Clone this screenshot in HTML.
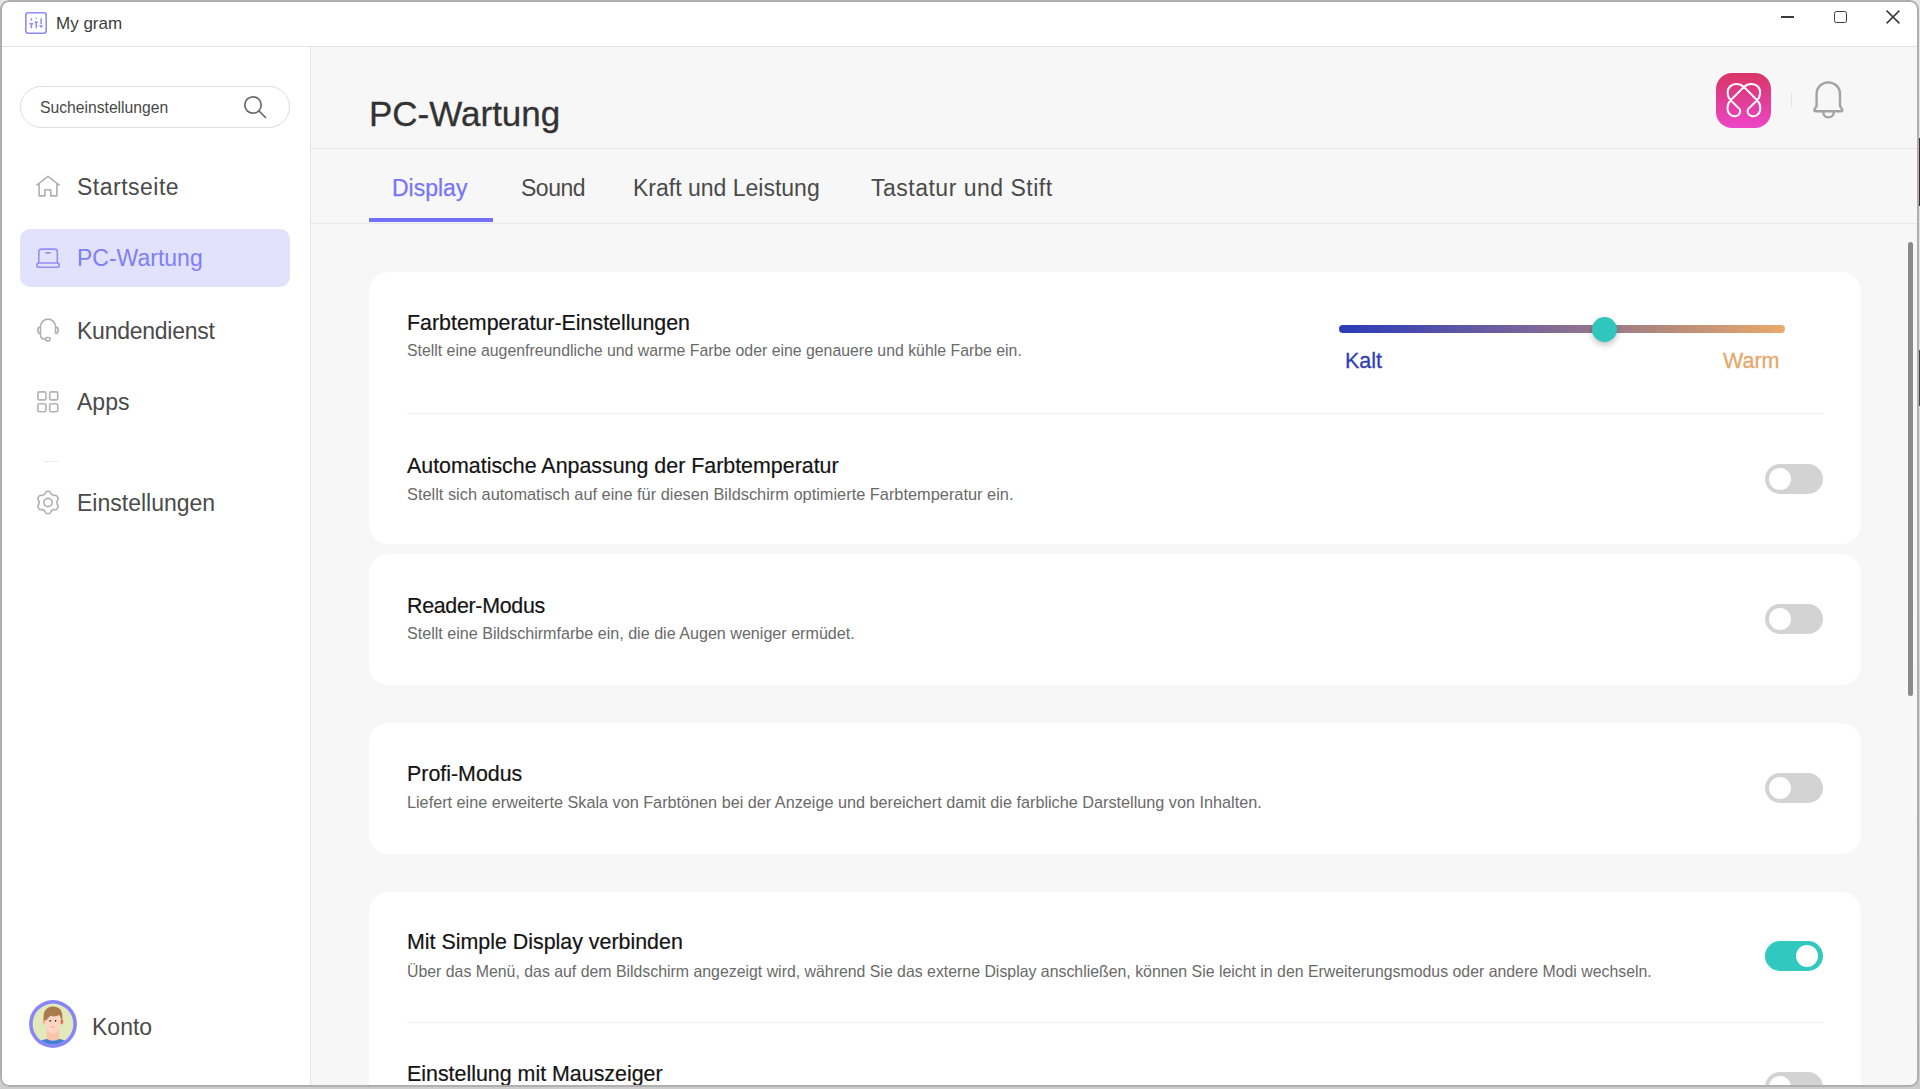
<!DOCTYPE html>
<html><head><meta charset="utf-8">
<style>
*{margin:0;padding:0;box-sizing:border-box}
html,body{width:1920px;height:1089px;overflow:hidden;background:linear-gradient(180deg,#e8e8e8,#cdcdcd);font-family:"Liberation Sans",sans-serif}
.abs{position:absolute}
svg.abs{z-index:3}
.t{position:absolute;white-space:nowrap;line-height:1}
#win{position:absolute;left:0;top:0;width:1918px;height:1087px;border-radius:9px;overflow:hidden;background:#f7f7f7}
#frame{position:absolute;left:-0.2px;top:-0.2px;width:1918.9px;height:1087.5px;border:2px solid #afafaf;border-radius:9px;pointer-events:none;z-index:10}
.nav{font-size:23px;color:#4a4a4a}
.card{position:absolute;left:369px;width:1492px;background:#fff;border-radius:20px}
.ct{font-size:21.4px;color:#141414;-webkit-text-stroke:0.2px #141414}
.cd{font-size:16px;color:#6a6a6a}
.tog{position:absolute;left:1764.5px;width:58px;height:30px;border-radius:15px;background:#d3d3d3}
.tog::after{content:"";position:absolute;left:4.5px;top:4px;width:22px;height:22px;border-radius:50%;background:#fff}
.tog.on{background:#30c8bf}
.tog.on::after{left:31.2px}
.sep{position:absolute;left:407px;width:1416px;height:1px;background:#efefef}
</style></head>
<body>
<div id="win">
  <!-- title bar -->
  <div class="abs" style="left:0;top:0;width:1918px;height:46px;background:#fff"></div>
  <div class="abs" style="left:0;top:46px;width:1918px;height:1px;background:#e3e3e3"></div>
  <svg class="abs" style="left:25px;top:12px" width="22" height="22" viewBox="0 0 22 22">
    <rect x="0.8" y="0.8" width="20.4" height="20.4" rx="2.5" fill="none" stroke="#8c8cfb" stroke-width="1.6"/>
    <g fill="#8c8cfb">
      <rect x="5.6" y="6.3" width="1.5" height="2.3"/><path d="M4.2 10.9H8.5L7.7 12.8H5Z"/><rect x="5.6" y="12.6" width="1.5" height="3.6"/>
      <rect x="10.5" y="6.1" width="1.5" height="0.9"/><path d="M9.3 10.9H13.2L12.3 9.2H10.2Z"/><rect x="10.5" y="10.8" width="1.5" height="5.4"/>
      <rect x="15.4" y="6.3" width="1.5" height="6"/><path d="M13.9 13.3H18.3L16.1 16.3Z"/>
    </g>
  </svg>
  <div class="t" style="left:56px;top:14.5px;font-size:17px;color:#3c3c3c">My gram</div>
  <div class="abs" style="left:1781px;top:16px;width:13px;height:1.5px;background:#3a3a3a"></div>
  <div class="abs" style="left:1834px;top:10.5px;width:12.5px;height:12.5px;border:1.4px solid #3a3a3a;border-radius:2.5px"></div>
  <svg class="abs" style="left:1886px;top:10px" width="14" height="14" viewBox="0 0 14 14"><path d="M0.6 0.6L13.4 13.4M13.4 0.6L0.6 13.4" stroke="#3a3a3a" stroke-width="1.5"/></svg>

  <!-- sidebar -->
  <div class="abs" style="left:0;top:47px;width:310px;height:1040px;background:#fff"></div>
  <div class="abs" style="left:310px;top:47px;width:1px;height:1040px;background:#e6e6e6"></div>
  <div class="abs" style="left:20px;top:86px;width:270px;height:42px;border:1.5px solid #dedede;border-radius:21px"></div>
  <div class="t" style="left:40px;top:99.5px;font-size:15.7px;color:#474747">Sucheinstellungen</div>
  <svg class="abs" style="left:243px;top:95px" width="24" height="24" viewBox="0 0 24 24"><circle cx="10" cy="10" r="8.2" fill="none" stroke="#6a6a6a" stroke-width="1.7"/><path d="M16 16L22.5 22.5" stroke="#6a6a6a" stroke-width="1.7" stroke-linecap="round"/></svg>


  <svg class="abs" style="left:32px;top:170px" width="32" height="32" viewBox="0 0 32 32" fill="none" stroke="#b0b0b0" stroke-width="1.65" stroke-linejoin="round"><path d="M4.4 15.3L16 6.3L27.6 15.3M7.1 13.2V25.9H12.9V19.7H18.8V25.9H24.9V13.2"/></svg>
  <svg class="abs" style="left:32px;top:242px" width="32" height="32" viewBox="0 0 32 32" fill="none" stroke="#8f8ffb" stroke-width="1.6" stroke-linecap="round"><path d="M6.8 20.8V9.6A2.5 2.5 0 0 1 9.3 7.1H22.8A2.5 2.5 0 0 1 25.3 9.6V20.8"/><rect x="4.9" y="21" width="22.3" height="4.3" rx="2"/><path d="M14 10.9H18"/></svg>
  <svg class="abs" style="left:32px;top:314px" width="32" height="32" viewBox="0 0 32 32" fill="none" stroke="#b3b3b3" stroke-width="1.65"><path d="M8.5 19.6V12.6A7.5 7.5 0 0 1 23.5 12.6V19.6"/><path d="M8.5 12.9A3.4 3.4 0 0 0 8.5 19.6"/><path d="M23.5 12.9A3.4 3.4 0 0 1 23.5 19.6"/><path d="M8.5 19.6V20.8C8.5 23.5 10.5 25.2 13.5 25.2"/><rect x="13.5" y="23.5" width="4.7" height="3.3" rx="1.65"/></svg>
  <svg class="abs" style="left:32px;top:386px" width="32" height="32" viewBox="0 0 32 32" fill="none" stroke="#b3b3b3" stroke-width="1.65"><rect x="5.9" y="5.8" width="8" height="8" rx="1.4"/><rect x="17.7" y="5.8" width="8" height="8" rx="1.4"/><rect x="5.9" y="17.7" width="8" height="8" rx="1.4"/><rect x="17.7" y="17.7" width="8" height="8" rx="1.4"/></svg>
  <svg class="abs" style="left:32px;top:486px" width="32" height="32" viewBox="0 0 32 32" fill="none" stroke="#b3b3b3" stroke-width="1.65" stroke-linejoin="round"><path d="M16.00 5.40 L16.97 5.46 L17.89 5.76 L18.59 6.84 L19.11 7.95 L19.77 8.41 L20.45 8.79 L21.12 9.19 L21.85 9.53 L23.07 9.43 L24.35 9.49 L25.07 10.15 L25.61 10.95 L26.04 11.82 L26.24 12.77 L25.66 13.91 L24.96 14.92 L24.89 15.72 L24.90 16.50 L24.89 17.28 L24.96 18.08 L25.66 19.09 L26.24 20.23 L26.04 21.18 L25.61 22.05 L25.07 22.85 L24.35 23.51 L23.07 23.57 L21.85 23.47 L21.12 23.81 L20.45 24.21 L19.77 24.59 L19.11 25.05 L18.59 26.16 L17.89 27.24 L16.97 27.54 L16.00 27.60 L15.03 27.54 L14.11 27.24 L13.41 26.16 L12.89 25.05 L12.23 24.59 L11.55 24.21 L10.88 23.81 L10.15 23.47 L8.93 23.57 L7.65 23.51 L6.93 22.85 L6.39 22.05 L5.96 21.18 L5.76 20.23 L6.34 19.09 L7.04 18.08 L7.11 17.28 L7.10 16.50 L7.11 15.72 L7.04 14.92 L6.34 13.91 L5.76 12.77 L5.96 11.82 L6.39 10.95 L6.93 10.15 L7.65 9.49 L8.93 9.43 L10.15 9.53 L10.88 9.19 L11.55 8.79 L12.23 8.41 L12.89 7.95 L13.41 6.84 L14.11 5.76 L15.03 5.46 L16.00 5.40Z"/><circle cx="16" cy="16.5" r="4.1"/></svg>
  <div class="t nav" style="left:77px;top:175.5px;letter-spacing:0.5px">Startseite</div>
  <div class="abs" style="left:20px;top:229px;width:270px;height:58px;background:#e2e2fc;border-radius:10px"></div>
  <div class="t nav" style="left:77px;top:246.7px;color:#7f7ff6">PC-Wartung</div>
  <div class="t nav" style="left:77px;top:319.6px;letter-spacing:-0.25px">Kundendienst</div>
  <div class="t nav" style="left:77px;top:390.7px">Apps</div>
  <div class="abs" style="left:43px;top:461px;width:15px;height:1px;background:#ececec"></div>
  <div class="t nav" style="left:77px;top:491.6px">Einstellungen</div>

  <svg class="abs" style="left:29px;top:1000px" width="48" height="48" viewBox="0 0 48 48">
    <defs><clipPath id="avc"><circle cx="24" cy="24" r="20.4"/></clipPath></defs>
    <circle cx="24" cy="24" r="23.9" fill="#8683fb"/>
    <circle cx="24" cy="24" r="20.4" fill="#e1e8b9"/>
    <g clip-path="url(#avc)">
      <path d="M6 48C8 41.5 13 38.8 24 38.8C35 38.8 40 41.5 42 48Z" fill="#3f7fd6"/>
      <path d="M17.8 28V38.5C20 41.5 28 41.5 30.2 38.5V28Z" fill="#f9c4aa"/>
      <ellipse cx="15.3" cy="21.8" rx="1.7" ry="2.3" fill="#f4b49a"/>
      <ellipse cx="32.6" cy="21.8" rx="1.8" ry="2.4" fill="#ec6b52"/>
      <path d="M16.2 15C16 25 17 32.5 24 33.5C31 32.5 32 25 31.8 15Z" fill="#fcd6c2"/>
      <path d="M14.8 21C13.5 13 16.5 6.8 23.5 6.6C31 6.4 34.5 11 33 21.5C32 19 31.5 16.5 30 15C27 16.5 24 17 22 15.5C20 17 18.5 18 17.5 20.5C16.5 19.5 15.8 20 14.8 21Z" fill="#a97a4c"/>
      <ellipse cx="21.2" cy="20.8" rx="0.8" ry="0.9" fill="#222"/><ellipse cx="26.6" cy="20.8" rx="0.8" ry="0.9" fill="#222"/>
      <path d="M22.5 27Q24 27.8 25.5 27" stroke="#e59a85" stroke-width="0.9" fill="none"/>
    </g>
  </svg>
  <div class="t nav" style="left:92px;top:1015.8px">Konto</div>

  <!-- main header -->
  <div class="t" style="left:369px;top:96.2px;font-size:35px;color:#333;-webkit-text-stroke:0.3px #333">PC-Wartung</div>
  <div class="abs" style="left:311px;top:148px;width:1607px;height:1px;background:#e4e4e4"></div>
  <div class="abs" style="left:311px;top:223px;width:1607px;height:1px;background:#e8e8e8"></div>
  <div class="abs" style="left:369px;top:218px;width:124px;height:4px;background:#7370f5"></div>
  <div class="t" style="left:392px;top:176.5px;font-size:23px;color:#7676f5;-webkit-text-stroke:0.25px #7676f5">Display</div>
  <div class="t" style="left:521px;top:176.5px;font-size:23px;color:#4a4a4a;letter-spacing:-0.5px">Sound</div>
  <div class="t" style="left:633px;top:176.5px;font-size:23px;color:#4a4a4a">Kraft und Leistung</div>
  <div class="t" style="left:871px;top:176.5px;font-size:23px;color:#4a4a4a;letter-spacing:0.5px">Tastatur und Stift</div>

  <div class="abs" style="left:1716px;top:73px;width:55px;height:55px;border-radius:16px;background:linear-gradient(#d93566,#ec45c8)"></div>
  <svg class="abs" style="left:1716px;top:73px" width="55" height="55" viewBox="0 0 55 55" fill="none" stroke="#fff" stroke-width="2" stroke-linejoin="round"><path d="M27.9 13.9L14.7 27.3C10.5 31.6 10.6 38.5 14 41.5C17.5 44.5 22.5 43.5 23.8 40C24.8 37.3 23.5 35.5 22 34.5L14.7 27.3C11 23.6 10.6 17 14 13.5C17.5 10 24 10.5 27.9 13.9L41.1 27.3C45.3 31.6 45.2 38.5 41.8 41.5C38.3 44.5 33.3 43.5 32 40C31 37.3 32.3 35.5 33.8 34.5L41.1 27.3C44.8 23.6 45.2 17 41.8 13.5C38.3 10 31.8 10.5 27.9 13.9Z"/></svg>
  <svg class="abs" style="left:1813px;top:81px" width="32" height="40" viewBox="0 0 32 40" fill="none" stroke="#a3a3a3" stroke-width="2.4" stroke-linejoin="round"><path d="M3.6 24.8V12.7A11.7 11.3 0 0 1 27 12.7V24.8L29 28.3Q29.8 30.3 27.8 30.3H2.8Q0.8 30.3 1.6 28.3Z"/><path d="M10.3 30.3V31.4A5.2 5 0 0 0 20.7 31.4V30.3"/></svg>
  <div class="abs" style="left:1791px;top:93px;width:1px;height:14px;background:#e2e2e2"></div>

  <!-- cards -->
  <div class="card" style="top:272px;height:272px"></div>
  <div class="card" style="top:554px;height:131px"></div>
  <div class="card" style="top:723px;height:130.5px"></div>
  <div class="card" style="top:892px;height:300px"></div>

  <div class="t ct" style="left:407px;top:312.9px">Farbtemperatur-Einstellungen</div>
  <div class="t cd" style="left:407px;top:343.3px;font-size:15.85px">Stellt eine augenfreundliche und warme Farbe oder eine genauere und kühle Farbe ein.</div>
  <div class="abs" style="left:1339px;top:325px;width:446px;height:8px;border-radius:4px;background:linear-gradient(90deg,#2a3ab8,#6a5ea0 35%,#8a7090 52%,#a98380 67.5%,#eaaa6a)"></div>
  <div class="abs" style="left:1591.5px;top:316.5px;width:25px;height:25px;border-radius:50%;background:#2ec6bd;box-shadow:0 3px 6px rgba(0,0,0,0.25)"></div>
  <div class="t" style="left:1345px;top:351px;font-size:21.5px;color:#2e3eb8;-webkit-text-stroke:0.3px #2e3eb8">Kalt</div>
  <div class="t" style="left:1723px;top:351px;font-size:21.5px;color:#e6a86a;-webkit-text-stroke:0.3px #e6a86a">Warm</div>
  <div class="sep" style="top:413px"></div>
  <div class="t ct" style="left:407px;top:455.9px">Automatische Anpassung der Farbtemperatur</div>
  <div class="t cd" style="left:407px;top:485.5px;font-size:16.37px">Stellt sich automatisch auf eine für diesen Bildschirm optimierte Farbtemperatur ein.</div>
  <div class="tog" style="top:464px"></div>

  <div class="t ct" style="left:407px;top:596.2px;letter-spacing:-0.3px">Reader-Modus</div>
  <div class="t cd" style="left:407px;top:624.7px;font-size:16.13px">Stellt eine Bildschirmfarbe ein, die die Augen weniger ermüdet.</div>
  <div class="tog" style="top:604px"></div>

  <div class="t ct" style="left:407px;top:764.1px">Profi-Modus</div>
  <div class="t cd" style="left:407px;top:793.5px;font-size:16.23px">Liefert eine erweiterte Skala von Farbtönen bei der Anzeige und bereichert damit die farbliche Darstellung von Inhalten.</div>
  <div class="tog" style="top:773px"></div>

  <div class="t ct" style="left:407px;top:932.4px">Mit Simple Display verbinden</div>
  <div class="t cd" style="left:407px;top:963.5px;font-size:15.86px">Über das Menü, das auf dem Bildschirm angezeigt wird, während Sie das externe Display anschließen, können Sie leicht in den Erweiterungsmodus oder andere Modi wechseln.</div>
  <div class="tog on" style="top:941px"></div>
  <div class="sep" style="top:1022px"></div>
  <div class="t ct" style="left:407px;top:1063.9px">Einstellung mit Mauszeiger</div>
  <div class="tog" style="top:1072px"></div>

  <div class="abs" style="left:1908px;top:242px;width:5px;height:454px;border-radius:2.5px;background:#8a8a8a"></div>
</div>
<div id="frame"></div>
<div class="abs" style="left:1918px;top:138px;width:2px;height:68px;background:#4a2834"></div>
<div class="abs" style="left:1918px;top:350px;width:2px;height:56px;background:#4e4644"></div>
</body></html>
